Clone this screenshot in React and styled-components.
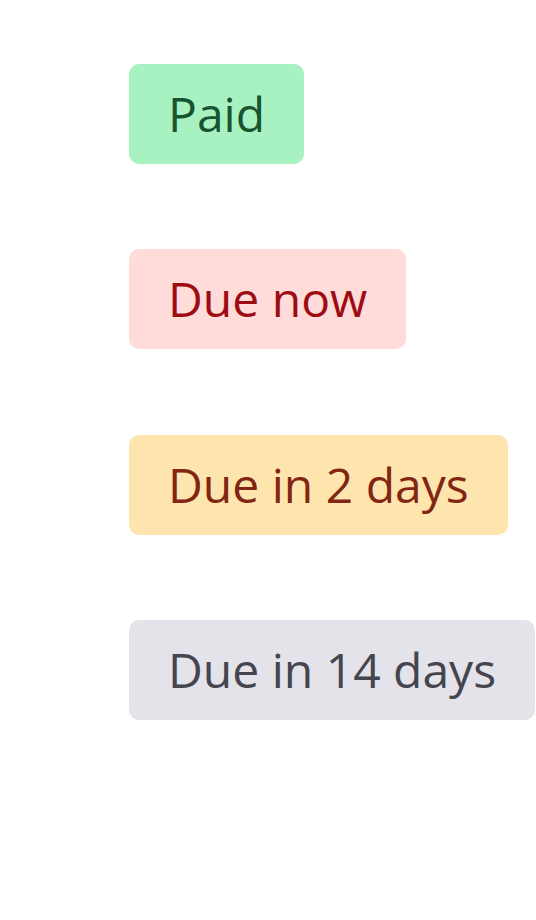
import styled, { createGlobalStyle } from 'styled-components';

const GlobalStyle = createGlobalStyle`
  html, body {
    margin: 0;
    padding: 0;
    background: #fff;
    overflow: hidden;
  }
`;

const tones = {
  success: { bg: '#a8f2c2', fg: '#17542f' },
  danger: { bg: '#ffdbd9', fg: '#9e0c13' },
  warning: { bg: '#fee5ad', fg: '#832513' },
  neutral: { bg: '#e3e3e9', fg: '#45454f' },
};

const App = () => {
  return (
    <>
      <GlobalStyle />
      <Wrapper>
        <Badge $tone="success">Paid</Badge>
        <Badge $tone="danger">Due now</Badge>
        <Badge $tone="warning">Due in 2 days</Badge>
        <Badge $tone="neutral">Due in 14 days</Badge>
      </Wrapper>
    </>
  );
};

const Wrapper = styled.div`
  display: flex;
  flex-direction: column;
  align-items: flex-start;
  gap: 85.3px;
  padding: 64px 0 0 129px;
  width: 536px;
  height: 920px;
  box-sizing: border-box;
`;

const Badge = styled.span`
  display: inline-flex;
  align-items: center;
  flex-shrink: 0;
  height: 100px;
  box-sizing: border-box;
  padding: 0 39px;
  border-radius: 10px;
  white-space: nowrap;
  font-family: 'Open Sans', 'Noto Sans', sans-serif;
  font-size: 48px;
  line-height: 1;
  background: ${({ $tone }) => tones[$tone].bg};
  color: ${({ $tone }) => tones[$tone].fg};
`;

export default App;
